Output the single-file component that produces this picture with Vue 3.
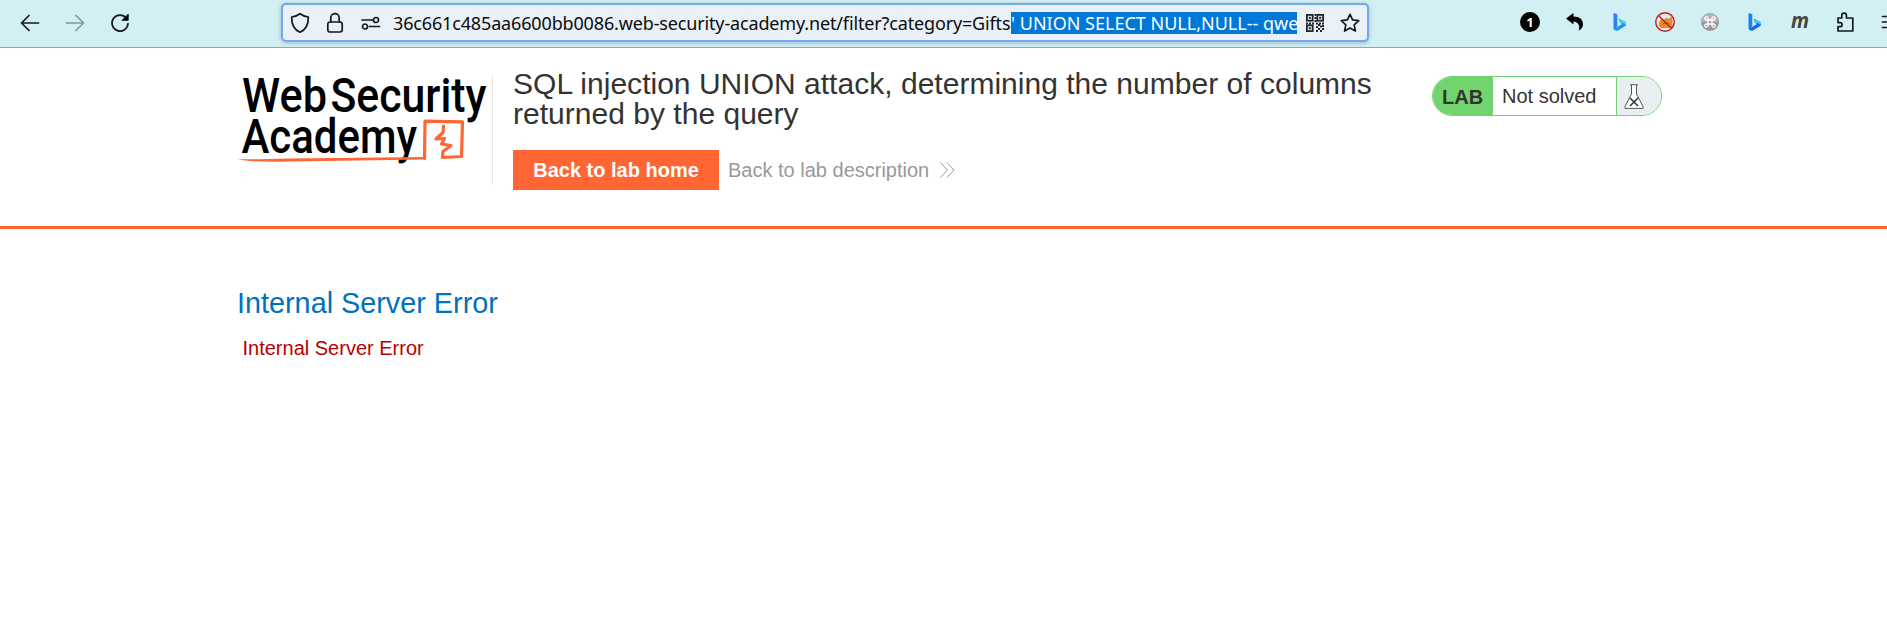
<script setup>
const url = '36c661c485aa6600bb0086.web-security-academy.net/filter?category=Gifts'
const selected = "' UNION SELECT NULL,NULL-- qwe"
const dots = [
  [8.5, 0], [8.5, 3], [8.5, 6], [0, 8.5], [3, 8.5], [6, 8.5], [10, 8.5], [13, 8.5], [16, 8.5],
  [10, 12], [14, 11.5], [12, 14], [16, 14], [10, 16], [14, 16], [12, 10], [16, 11],
]
</script>

<template>
  <div class="page">
    <div class="toolbar">
      <div class="nav">
        <svg width="20" height="20" viewBox="0 0 20 20" class="line"><path d="M18.500 10H2M9 2.500L1.500 10L9 17.500" /></svg>
        <svg width="20" height="20" viewBox="0 0 20 20" class="line dim"><path d="M1.500 10H18M11 2.500L18.500 10L11 17.500" /></svg>
        <svg width="20" height="20" viewBox="0 0 20 20" class="line"><path d="M16.200 5A8 8 0 1 0 18 10.500" /><path d="M18.200 1.500V7.300H12.400Z" fill="#000" stroke-width="1" /></svg>
      </div>
      <div class="urlbar">
        <svg class="line u1" width="20" height="22" viewBox="0 0 20 22"><path d="M10 1.800C7.500 3.700 4.500 4.700 1.700 5C1.500 11.500 3.500 17.500 10 20.200C16.500 17.500 18.500 11.500 18.300 5C15.500 4.700 12.500 3.700 10 1.800Z" /></svg>
        <svg class="line u2" width="18" height="22" viewBox="0 0 18 22"><rect x="1.800" y="10" width="14.400" height="10" rx="2.200" /><path d="M4.800 10V5.800A4.200 4.200 0 0 1 13.200 5.800V10" /></svg>
        <svg class="line u3" width="20" height="14" viewBox="0 0 20 14"><path d="M1 4H11.500M8.500 10.500H18.500" /><circle cx="15" cy="4" r="2.500" /><circle cx="4" cy="10.500" r="2.500" /></svg>
        <div class="url"><span class="plain">{{ url }}</span><span class="sel">{{ selected }}</span></div>
        <svg class="u4" width="18" height="18" viewBox="0 0 18 18">
          <g fill="none" stroke="#22262b" stroke-width="1.800"><rect x=".9" y=".9" width="5.800" height="5.800" /><rect x="11.300" y=".9" width="5.800" height="5.800" /><rect x=".9" y="11.300" width="5.800" height="5.800" /></g>
          <g fill="#22262b"><rect x="2.800" y="2.800" width="2" height="2" /><rect x="13.200" y="2.800" width="2" height="2" /><rect x="2.800" y="13.200" width="2" height="2" /><rect v-for="(d, i) in dots" :key="i" :x="d[0]" :y="d[1]" width="2" height="2" /></g>
        </svg>
        <svg class="line u5" width="20" height="20" viewBox="0 0 20 20"><path d="M10 1.300L12.600 6.900L18.700 7.700L14.200 11.900L15.400 18L10 15L4.600 18L5.800 11.900L1.300 7.700L7.400 6.900Z" /></svg>
      </div>
      <div class="ext">
        <svg viewBox="0 0 20 20"><circle cx="10" cy="10" r="10" /><text x="10" y="14.700" text-anchor="middle" class="one">1</text></svg>
        <svg viewBox="0 0 20 20"><path d="M1 6.500L8.500 1V4.500C14.500 4.500 18 7.500 18 12C18 15 16.500 17.500 13.500 18.500C14.800 16 14.800 10 8.500 9.500V12.500Z" /></svg>
        <svg viewBox="0 0 20 20"><path d="M3.500 1L7.300 2.300V14L4.500 18Q3.500 17.500 3.500 16Z" fill="#2683f5" /><path d="M8.500 6.500L16 10.200V13.500L8 18.500Q5.500 19.500 3.800 17L12 12L10 10.700Z" fill="#1f94f7" /><path d="M8.500 6.500L16 10.200V13Q14 11.200 10.500 10.800Z" fill="#35d5e5" /></svg>
        <svg viewBox="0 0 20 20"><circle cx="10" cy="10" r="9.400" fill="#e2eeee" /><path d="M4 11L6 6.500L8 8L12 5.500L14 7L16.500 4L17.500 8V16H6L4 14Z" fill="#e98a20" /><path d="M8 12L11 10.500L14 12" stroke="#7c501f" fill="none" /><g fill="none" stroke="#cf1622" stroke-width="1.400"><circle cx="10" cy="10" r="9.300" /><path d="M3.500 3.500L16.500 16.500" /></g></svg>
        <svg viewBox="0 0 20 20"><circle cx="10" cy="10" r="9" fill="#999" /><path d="M1 10A9 9 0 0 1 19 10Z" fill="#b4b4b4" /><path d="M8 8H12V12H8ZM8 8H6.700A1.600 1.600 0 1 1 8 6.500ZM12 8V6.500A1.600 1.600 0 1 1 13.500 8ZM12 12H13.500A1.600 1.600 0 1 1 12 13.500ZM8 12V13.500A1.600 1.600 0 1 1 6.500 12Z" fill="none" stroke="#fff" stroke-width="1.300" /></svg>
        <svg viewBox="0 0 20 20"><path d="M3.500 1L7.300 2.300V14L4.500 18Q3.500 17.500 3.500 16Z" fill="#1683f0" /><path d="M8.500 6.500L16 10.200V13.500L8 18.500Q5.500 19.500 3.800 17L12 12L10 10.700Z" fill="#1667ee" /><path d="M8.500 6.500L16 10.200V13Q14 11.200 10.500 10.800Z" fill="#35d5e5" /></svg>
        <svg viewBox="0 0 20 20" class="mark"><text x="0" y="15.600" class="em" textLength="18" lengthAdjust="spacingAndGlyphs">m</text></svg>
        <svg viewBox="0 0 20 20" class="line"><path d="M2 6H5.800V3.500A2.300 2.300 0 0 1 10.400 3.500V6H16.800V19H2V14.700H4A2 2 0 0 0 4 10.600H2Z" /></svg>
        <svg viewBox="0 0 20 20" class="line"><path d="M1.500 4.500H18M1.500 10H18M1.500 15.500H18" /></svg>
      </div>
    </div>

    <header class="lab-header">
      <svg class="logo" width="262" height="130" viewBox="230 60 262 130">
        <g class="word">
          <text x="242" y="112" textLength="85" lengthAdjust="spacingAndGlyphs">Web</text>
          <text x="330.500" y="112" textLength="156" lengthAdjust="spacingAndGlyphs">Security</text>
          <text x="241.500" y="152.500" textLength="175.500" lengthAdjust="spacingAndGlyphs">Academy</text>
        </g>
        <path d="M238 159.300Q250 162.500 290 161.500L425 159.500V157L290 158.500Q250 159.500 238 159.300Z" fill="#ff6633" />
        <path d="M424.500 158.500L425 121.200L462.500 121.800L461.500 156.500L442.500 157.500L443 151.500L451 145.500L441.500 144L444.500 138.500L436 139L443 132.500L443.500 126" class="bolt" />
      </svg>
      <div class="info">
        <h2>SQL injection UNION attack, determining the number of columns returned by the query</h2>
        <div class="actions">
          <a class="button">Back to lab home</a>
          <a class="link">Back to lab description</a>
          <svg width="15" height="16" viewBox="0 0 15 16"><path d="M.5.500L7.500 8L.5 15.500M7 .5L14 8L7 15.500" fill="none" stroke="#999" /></svg>
        </div>
      </div>
      <div class="status">
        <b>LAB</b>
        <span>Not solved</span>
        <i><svg width="20" height="25" viewBox="0 0 20 25"><path d="M6 .7H14M7.500 1V10L1 22.500V24.400H19V22.500L12.500 10V1" fill="#fff" stroke="#555" /><path d="M6 14L14 22M14 14L6 22" fill="none" stroke="#333" stroke-width="1.600" /></svg></i>
      </div>
    </header>

    <main>
      <h1>Internal Server Error</h1>
      <p>Internal Server Error</p>
    </main>
  </div>
</template>

<style>
body { background: #fff; overflow: hidden; }
</style>

<style scoped>
.page { width: 1887px; height: 640px; overflow: hidden; font-family: "Liberation Sans", Arial, sans-serif; color: #333332; }
svg { display: block; flex: none; }
.line { fill: none; stroke: #15191d; stroke-width: 1.7; stroke-linejoin: round; stroke-linecap: round; }
.toolbar { box-sizing: border-box; height: 48px; display: flex; background: #d2eff3; border-bottom: 1px solid #91a6ae; }
.nav { width: 281px; flex: none; box-sizing: border-box; padding: 13px 0 0 20px; display: flex; gap: 25px; }
.dim { opacity: .4; }
.urlbar { box-sizing: border-box; width: 1088px; height: 39px; margin-top: 3px; flex: none; display: flex; align-items: center; border: 2px solid #73a7f0; border-radius: 5px; background: #e9f0f6; box-shadow: 0 1px 4px rgba(0, 40, 60, .25); }
.u1 { margin-left: 7px; }
.u2 { margin-left: 16px; }
.u3 { margin-left: 17px; }
.url { margin-left: 12px; width: 904px; flex: none; display: flex; font: 18px/22px "Noto Sans", "Open Sans", sans-serif; color: #0c0c0d; white-space: pre; }
.plain { width: 618px; flex: none; letter-spacing: -.15px; }
.sel { width: 286px; flex: none; background: #0078d7; color: #fff; }
.u4 { margin-left: 9px; }
.u5 { margin-left: 16px; }
.ext { margin: 12px 0 0 151px; display: flex; gap: 25.100px; }
.ext svg { width: 20px; height: 20px; }
.ext .mark { overflow: visible; }
.one { font: bold 13px "Noto Sans", sans-serif; fill: #fff; }
.em { font: italic bold 22px "Open Sans", sans-serif; fill: #444; }
.lab-header { box-sizing: border-box; height: 181px; display: flex; border-bottom: 3px solid #ff6633; }
.logo { margin: 12px 0 0 230px; overflow: visible; }
.word { font: 500 47.500px Roboto, sans-serif; fill: #000; }
.bolt { fill: none; stroke: #ff6633; stroke-width: 3.2; stroke-linejoin: round; stroke-linecap: round; }
.info { width: 892px; margin-top: 28px; height: 109px; box-sizing: border-box; border-left: 1px solid #e3e5e8; padding-left: 20px; }
h2 { margin: -7px 0 0; font-size: 30px; line-height: 30px; font-weight: 400; letter-spacing: .02px; }
.actions { display: flex; align-items: center; margin-top: 21px; height: 40px; font-size: 20px; }
.button { box-sizing: border-box; width: 206px; line-height: 40px; text-align: center; background: #ff6633; color: #fff; font-weight: 700; }
.link { margin-left: 9px; width: 212px; color: #999; }
.status { box-sizing: border-box; width: 230px; height: 40px; margin: 28px 0 0 48px; display: flex; border: 1px solid #72d46e; border-radius: 20px; overflow: hidden; font-size: 20px; line-height: 38px; }
.status b { width: 60px; flex: none; box-sizing: border-box; padding-left: 9px; background: #72d46e; line-height: 40px; }
.status span { width: 124px; flex: none; box-sizing: border-box; padding-left: 9px; border-right: 1px solid #72d46e; }
.status i { flex: 1; background: #e9eef2; padding: 7px 0 0 7px; }
main { padding: 58px 0 0 237px; }
h1 { margin: 0; font-size: 28.8px; line-height: 32px; font-weight: 400; color: #0071bc; }
p { margin: 17px 0 0 5.5px; font-size: 20px; line-height: 24px; color: #b80000; }
</style>
